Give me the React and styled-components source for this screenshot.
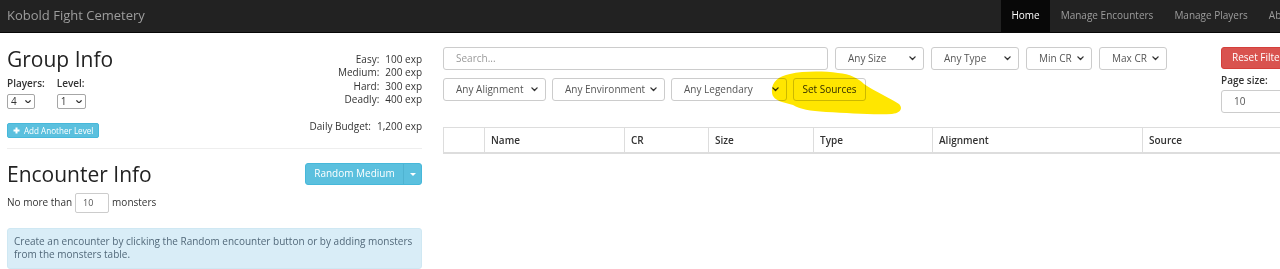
import React from "react";
import styled, { createGlobalStyle } from "styled-components";

const Global = createGlobalStyle`
  html, body { margin: 0; padding: 0; background: #fff; overflow: hidden; }
  body { font-family: "Open Sans", "Liberation Sans", sans-serif; font-size: 10px; line-height: 1.35; color: #333; }
  * { box-sizing: border-box; }
`;

const Page = styled.div`
  position: relative;
  width: 1320px;
`;

const Navbar = styled.nav`
  display: flex;
  align-items: stretch;
  height: 33px;
  background: #222;
  border-bottom: 1px solid #080808;
  padding: 0 13px 0 7px;
`;

const Brand = styled.div`
  display: flex;
  align-items: center;
  font-size: 13px;
  color: #9d9d9d;
`;

const NavList = styled.ul`
  display: flex;
  margin: 0 0 0 auto;
  padding: 0;
  list-style: none;
`;

const NavItem = styled.li`
  display: flex;
  align-items: center;
  padding: 0 10px 0 11px;
  font-size: 10px;
  color: ${(p) => (p.$active ? "#fff" : "#9d9d9d")};
  background: ${(p) => (p.$active ? "#080808" : "transparent")};
  ${(p) => p.$active && "padding: 0 10px;"}
`;

const Main = styled.div`
  display: grid;
  grid-template-columns: 415px 1fr;
  align-items: start;
  column-gap: 21px;
  padding: 13px 7px 0 7px;
`;

const LeftCol = styled.div`
  display: flex;
  flex-direction: column;
`;

const GroupRow = styled.div`
  display: flex;
  justify-content: space-between;
`;

const GroupLeft = styled.div`
  display: flex;
  flex-direction: column;
`;

const Heading = styled.h2`
  margin: 0;
  font-size: 21px;
  font-weight: 400;
  line-height: 26px;
  color: #222;
`;

const FieldRow = styled.div`
  display: flex;
  gap: 12px;
  margin-top: 4px;
`;

const Field = styled.div`
  display: flex;
  flex-direction: column;
  gap: 4px;
`;

const Label = styled.label`
  font-weight: 600;
  font-size: 10px;
  line-height: 14px;
  color: #333;
`;

const Chevron = ({ size = 7 }) => (
  <svg width={size} height={size * 0.62} viewBox="0 0 8 5" style={{ display: "block" }}>
    <polyline points="1,1 4,4 7,1" fill="none" stroke="#333" strokeWidth="1.6" strokeLinecap="round" strokeLinejoin="round" />
  </svg>
);

const MiniSelect = styled.div`
  display: flex;
  align-items: center;
  justify-content: space-between;
  width: ${(p) => p.$w}px;
  height: 15px;
  padding: 0 3px 0 3px;
  border: 1px solid #a6a6a6;
  border-radius: 2px;
  font-size: 10px;
  color: #333;
  background: #fff;
`;

const XsButton = styled.button`
  display: inline-flex;
  align-items: center;
  gap: 4px;
  align-self: flex-start;
  margin-top: 14px;
  height: 15px;
  padding: 0 5px;
  border: 1px solid #46b8da;
  border-radius: 2px;
  background: #5bc0de;
  color: #fff;
  font-family: inherit;
  font-size: 8.1px;
`;

const ExpBlock = styled.div`
  display: flex;
  flex-direction: column;
  margin-top: 7px;
  line-height: 13.4px;
`;

const ExpLine = styled.div`
  display: flex;
  justify-content: flex-end;
  gap: 6px;
  margin-top: ${(p) => (p.$gap ? "13.4px" : "0")};
`;

const Rule = styled.hr`
  margin: 10px 0 0 0;
  border: 0;
  border-top: 1px solid #eee;
`;

const EncounterHeader = styled.div`
  display: flex;
  justify-content: space-between;
  align-items: center;
  margin-top: 12px;
`;

const SplitButton = styled.div`
  display: flex;
  height: 22px;
  border: 1px solid #46b8da;
  border-radius: 3px;
  background: #5bc0de;
  color: #fff;
  overflow: hidden;
`;

const SplitMain = styled.div`
  display: flex;
  align-items: center;
  justify-content: center;
  width: 97px;
  white-space: nowrap;
  font-size: 10px;
`;

const SplitCaret = styled.div`
  display: flex;
  align-items: center;
  justify-content: center;
  width: 18px;
  border-left: 1px solid #4fb3d1;
  &::after {
    content: "";
    border-left: 3px solid transparent;
    border-right: 3px solid transparent;
    border-top: 3px solid #fff;
  }
`;

const LimitRow = styled.div`
  display: flex;
  align-items: center;
  gap: 3px;
  margin-top: 6px;
`;

const SmallInput = styled.div`
  display: flex;
  align-items: center;
  width: 34px;
  height: 20px;
  padding-left: 7px;
  border: 1px solid #ccc;
  border-radius: 2px;
  font-size: 9px;
  color: #555;
`;

const Alert = styled.div`
  margin-top: 15px;
  padding: 6px 6px 6px 6px;
  background: #d9edf7;
  border: 1px solid #cfe8f3;
  border-radius: 3px;
  color: #52697a;
  line-height: 13.4px;
`;

const RightCol = styled.div`
  display: grid;
  grid-template-columns: 1fr 92px;
  align-content: start;
  column-gap: 21px;
  row-gap: 14px;
  padding-top: 1px;
`;

const Filters = styled.div`
  display: flex;
  flex-direction: column;
  gap: 8px;
`;

const FilterRow = styled.div`
  display: flex;
  gap: ${(p) => p.$gap || 7}px;
`;

const TextInput = styled.div`
  display: flex;
  align-items: center;
  width: ${(p) => p.$w}px;
  height: 23px;
  padding-left: 12px;
  border: 1px solid #ccc;
  border-radius: 3px;
  font-size: 10px;
  color: ${(p) => (p.$placeholder ? "#999" : "#555")};
  background: #fff;
`;

const Select = styled.div`
  display: flex;
  align-items: center;
  justify-content: space-between;
  width: ${(p) => p.$w}px;
  height: 23px;
  padding: 0 7px 0 12px;
  border: 1px solid #ccc;
  border-radius: 3px;
  font-size: 10px;
  color: #555;
  background: #fff;
`;

const DefaultButton = styled.div`
  display: flex;
  align-items: center;
  justify-content: center;
  width: ${(p) => p.$w}px;
  height: 23px;
  border: 1px solid #ccc;
  border-radius: 3px;
  font-size: 10px;
  color: #333;
  background: #fff;
`;

const Side = styled.div`
  display: flex;
  flex-direction: column;
`;

const DangerButton = styled.div`
  display: flex;
  align-items: center;
  height: 22px;
  padding: 0 10px;
  border: 1px solid #d43f3a;
  border-radius: 3px;
  background: #d9534f;
  color: #fff;
  font-size: 10px;
  white-space: nowrap;
`;

const SideLabel = styled(Label)`
  margin-top: 4px;
`;

const PageInput = styled(TextInput)`
  margin-top: 3px;
  width: 92px;
`;

const Table = styled.table`
  grid-column: 1 / -1;
  width: 100%;
  table-layout: fixed;
  border-collapse: collapse;
`;

const Th = styled.th`
  height: 25px;
  padding: 0 6px;
  text-align: left;
  vertical-align: middle;
  font-weight: 600;
  font-size: 10px;
  line-height: 14px;
  color: #333;
  border-top: 1px solid #ddd;
  border-bottom: 2px solid #ddd;
  border-left: 1px solid #ddd;
`;

const Scribble = styled.svg`
  position: absolute;
  left: 768px;
  top: 68px;
  mix-blend-mode: multiply;
  pointer-events: none;
`;

const columns = [
  { w: 41, label: "" },
  { w: 140, label: "Name" },
  { w: 84, label: "CR" },
  { w: 105, label: "Size" },
  { w: 119, label: "Type" },
  { w: 210, label: "Alignment" },
  { w: null, label: "Source" },
];

export default function App() {
  return (
    <Page>
      <Global />
      <Navbar>
        <Brand>Kobold Fight Cemetery</Brand>
        <NavList>
          <NavItem $active>Home</NavItem>
          <NavItem>Manage Encounters</NavItem>
          <NavItem>Manage Players</NavItem>
          <NavItem>About</NavItem>
        </NavList>
      </Navbar>
      <Main>
        <LeftCol>
          <GroupRow>
            <GroupLeft>
              <Heading>Group Info</Heading>
              <FieldRow>
                <Field>
                  <Label>Players:</Label>
                  <MiniSelect $w={28}>4<Chevron size={6} /></MiniSelect>
                </Field>
                <Field>
                  <Label>Level:</Label>
                  <MiniSelect $w={29}>1<Chevron size={6} /></MiniSelect>
                </Field>
              </FieldRow>
              <XsButton>
                <svg width="7" height="7" viewBox="0 0 7 7">
                  <path d="M3.5 0.5v6M0.5 3.5h6" stroke="#fff" strokeWidth="2" />
                </svg>
                Add Another Level
              </XsButton>
            </GroupLeft>
            <ExpBlock>
              <ExpLine><span>Easy:</span><span>100 exp</span></ExpLine>
              <ExpLine><span>Medium:</span><span>200 exp</span></ExpLine>
              <ExpLine><span>Hard:</span><span>300 exp</span></ExpLine>
              <ExpLine><span>Deadly:</span><span>400 exp</span></ExpLine>
              <ExpLine $gap><span>Daily Budget:</span><span>1,200 exp</span></ExpLine>
            </ExpBlock>
          </GroupRow>
          <Rule />
          <EncounterHeader>
            <Heading>Encounter Info</Heading>
            <SplitButton>
              <SplitMain>Random Medium</SplitMain>
              <SplitCaret />
            </SplitButton>
          </EncounterHeader>
          <LimitRow>
            <span>No more than</span>
            <SmallInput>10</SmallInput>
            <span>monsters</span>
          </LimitRow>
          <Alert>
            Create an encounter by clicking the Random encounter button or by adding monsters from the monsters table.
          </Alert>
        </LeftCol>
        <RightCol>
          <Filters>
            <FilterRow>
              <TextInput $w={385} $placeholder>Search...</TextInput>
              <Select $w={89}>Any Size<Chevron /></Select>
              <Select $w={88}>Any Type<Chevron /></Select>
              <Select $w={66}>Min CR<Chevron /></Select>
              <Select $w={68}>Max CR<Chevron /></Select>
            </FilterRow>
            <FilterRow $gap={6}>
              <Select $w={103}>Any Alignment<Chevron /></Select>
              <Select $w={113}>Any Environment<Chevron /></Select>
              <Select $w={116}>Any Legendary<Chevron /></Select>
              <DefaultButton $w={73}>Set Sources</DefaultButton>
            </FilterRow>
          </Filters>
          <Side>
            <DangerButton>Reset Filters</DangerButton>
            <SideLabel>Page size:</SideLabel>
            <PageInput>10</PageInput>
          </Side>
          <Table>
            <colgroup>
              {columns.map((c, i) => (
                <col key={i} style={c.w ? { width: c.w } : undefined} />
              ))}
            </colgroup>
            <thead>
              <tr>
                {columns.map((c, i) => (
                  <Th key={i}>{c.label}</Th>
                ))}
              </tr>
            </thead>
          </Table>
        </RightCol>
      </Main>
      <Scribble width="140" height="50" viewBox="0 0 140 50">
        <path
          d="M4,24 C3,15 10,8 22,6 C35,3 55,3 70,5 C82,6 90,10 96,16 C108,24 122,30 131,36 C135,40 133,45 124,46 C105,47 80,45 58,44 C42,43 32,41 25,37 L14,34 C8,32 4,29 4,24 Z"
          fill="#ffe600"
        />
      </Scribble>
    </Page>
  );
}
